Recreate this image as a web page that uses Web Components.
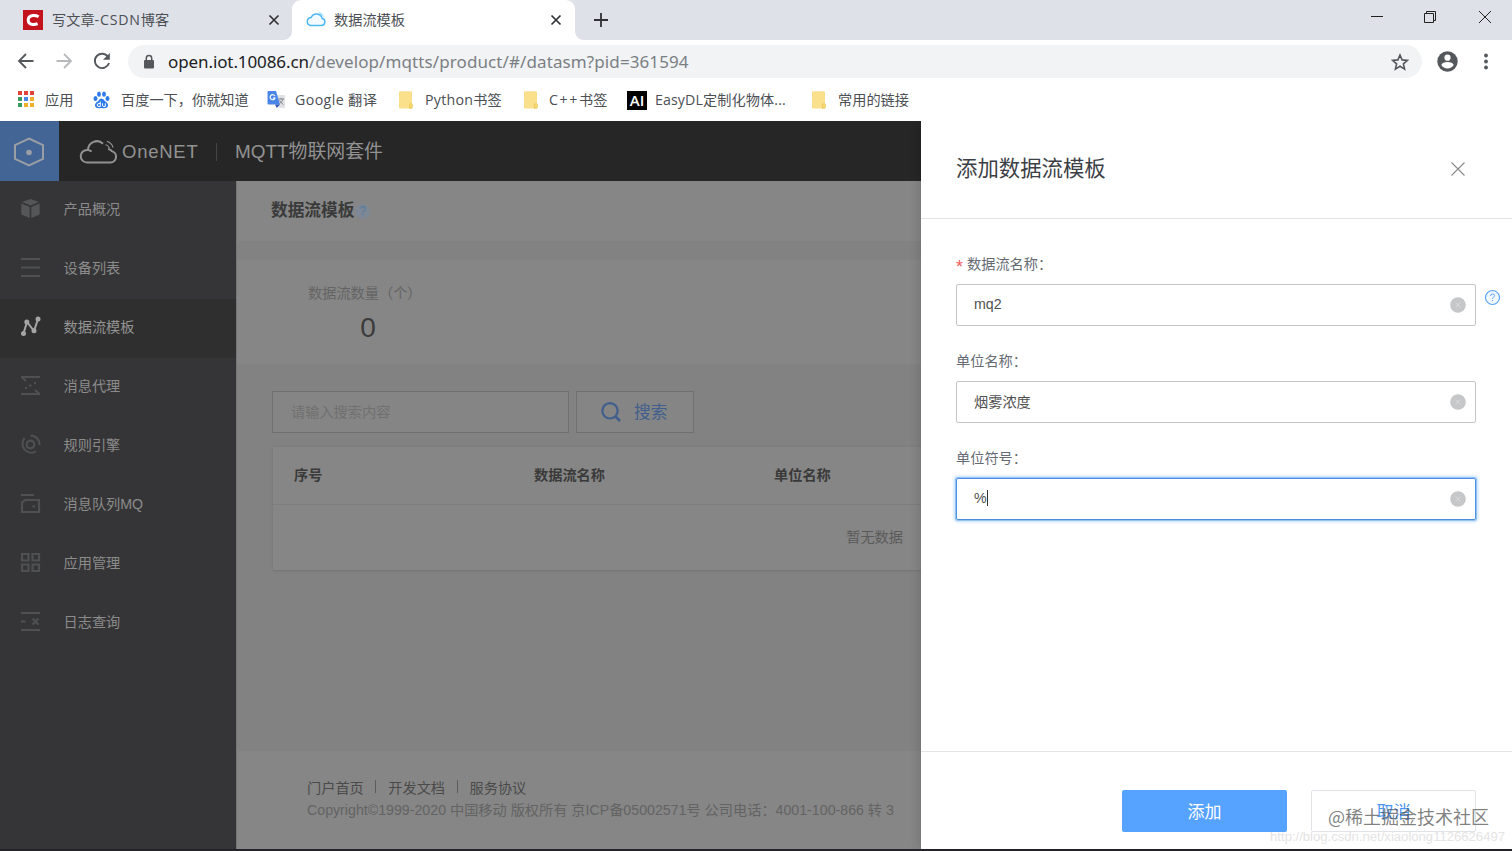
<!DOCTYPE html>
<html lang="zh-CN">
<head>
<meta charset="utf-8">
<title>数据流模板</title>
<style>
	html, body {
		margin: 0;
		height: 100%;
		overflow: hidden;
	}

	body {
		font: 14.2px/20px "Liberation Sans", "Noto Sans CJK SC", sans-serif;
		background: #fff;
	}
</style>
</head>
<body>
<browser-window></browser-window>

<script>
function define(name, html) {
	customElements.define(name, class extends HTMLElement {
		constructor() {
			super();
			this.attachShadow({ mode: 'open' });
			this.shadowRoot.innerHTML = html;
		}
	});
}

/* ---------- browser ---------- */

define('browser-tab', `
	<style>
	:host {
		display: flex;
		align-items: center;
		box-sizing: border-box;
		height: 40px;
		padding: 0 11px 0 14px;
		color: #4c4f54;
		position: relative;
	}

	:host([active]) {
		background: #fff;
		border-radius: 9px 9px 0 0;
	}

	:host([active])::before,
	:host([active])::after {
		content: '';
		position: absolute;
		bottom: 0;
		width: 8px;
		height: 8px;
	}

	:host([active])::before {
		left: -8px;
		background: radial-gradient(circle at 0 0, transparent 7.5px, #fff 8px);
	}

	:host([active])::after {
		right: -8px;
		background: radial-gradient(circle at 100% 0, transparent 7.5px, #fff 8px);
	}

	.title {
		flex: 1;
		margin-left: 8px;
		white-space: nowrap;
	}

	svg {
		width: 16px;
		height: 16px;
	}
	</style>
	<slot name="icon"></slot>
	<div class="title"><slot></slot></div>
	<svg viewBox="0 0 16 16"><path d="M3.5 3.5l9 9M12.5 3.5l-9 9" stroke="#303236" stroke-width="1.7"/></svg>
`);

define('tab-strip', `
	<style>
	:host {
		display: flex;
		height: 40px;
		background: #dee1e8;
		font-family: "Open Sans", "Noto Sans CJK SC", sans-serif;
	}

	.first {
		width: 292px;
		padding: 0 10px 0 23px;
	}

	.first span {
		margin-left: 1px;
	}

	.first em {
		font-style: normal;
		letter-spacing: .8px;
	}

	.second {
		width: 283px;
		padding-left: 13px;
	}

	.second span {
		margin-left: -1px;
	}

	.plus {
		width: 16px;
		margin: 12px 0 0 18px;
		height: 16px;
	}

	.win {
		display: flex;
		gap: 38px;
		margin: 9px 19px 0 auto;
	}

	.win svg {
		width: 16px;
		height: 16px;
	}
	</style>
	<browser-tab class="first">
		<svg slot="icon" width="20" height="20" viewBox="0 0 20 20"><rect width="20" height="20" fill="#c3141e"/><path d="M15.600 6.700Q13 5.200 9.600 5.600 5.200 6.400 5.200 10.200q.2 4 4.600 4.200 2.600.2 4.800-.8" fill="none" stroke="#fff" stroke-width="3"/></svg>
		<span>写文章<em>-CSDN</em>博客</span>
	</browser-tab>
	<browser-tab class="second" active>
		<svg slot="icon" width="22" height="18" viewBox="0 0 22 18"><path d="M5.500 14.500h11a3.500 3.500 0 0 0 .7-6.900A5.800 5.800 0 0 0 6.200 6.400a4.100 4.100 0 0 0-.7 8.100z" fill="#f3fbff" stroke="#4db8f2" stroke-width="1.5"/><path d="M14 1.600q3.600 1 4.600 4" fill="none" stroke="#8bd3f7"/></svg>
		<span>数据流模板</span>
	</browser-tab>
	<svg class="plus" viewBox="0 0 16 16"><path d="M8 1v14M1 8h14" stroke="#303236" stroke-width="1.8"/></svg>
	<div class="win">
		<svg viewBox="0 0 16 16"><path d="M2 7.500h12" stroke="#222"/></svg>
		<svg viewBox="0 0 16 16"><path d="M1.500 4.500h9v9h-9zM3.500 4.500v-2h9v9h-2" fill="none" stroke="#222"/></svg>
		<svg viewBox="0 0 16 16"><path d="M2 2l12 12M14 2l-12 12" stroke="#222"/></svg>
	</div>
`);

define('browser-toolbar', `
	<style>
	:host {
		display: flex;
		align-items: center;
		height: 43px;
		padding: 0 15px 0 16px;
		font-family: "Noto Sans", sans-serif;
	}

	.nav {
		display: flex;
		gap: 18px;
		margin-right: 16px;
		padding-bottom: 1px;
	}

	.nav svg {
		width: 20px;
		height: 20px;
	}

	.address {
		flex: 1;
		display: flex;
		align-items: center;
		height: 33px;
		padding: 0 11px 0 14px;
		margin-right: 15px;
		border-radius: 17px;
		background: #f1f3f4;
		font-size: 17px;
		line-height: 33px;
		color: #7b7f84;
		white-space: nowrap;
	}

	.url {
		margin-left: 12px;
		flex: 1;
		letter-spacing: .1px;
	}

	b {
		font-weight: 400;
		letter-spacing: -.1px;
		color: #202124;
	}

	.dots {
		margin-left: 16px;
	}
	</style>
	<div class="nav">
		<svg viewBox="0 0 20 20"><path d="M17.500 10H3M10 3l-7 7 7 7" fill="none" stroke="#54575b" stroke-width="1.8"/></svg>
		<svg viewBox="0 0 20 20"><path d="M2.500 10H17M10 3l7 7-7 7" fill="none" stroke="#b7b9bb" stroke-width="1.8"/></svg>
		<svg viewBox="0 0 20 20"><path d="M16.300 6.200A7.200 7.200 0 1 0 17 12" fill="none" stroke="#54575b" stroke-width="1.900"/><path d="M17.800 2v6.800H11z" fill="#54575b"/></svg>
	</div>
	<div class="address">
		<svg width="14" height="16" viewBox="0 0 14 16"><rect x="2" y="6" width="10" height="8.500" rx="1" fill="#54575b"/><path d="M4.300 6.500V4.300a2.700 2.700 0 0 1 5.400 0v2.200" fill="none" stroke="#54575b" stroke-width="1.500"/></svg>
		<div class="url"><b>open.iot.10086.cn</b>/develop/mqtts/product/#/datasm?pid=361594</div>
		<svg width="20" height="20" viewBox="0 0 20 20"><path d="M9 3l2.100 4.900 5.300.5-4 3.500 1.200 5.200L9 14.300l-4.600 2.800 1.200-5.200-4-3.500 5.300-.5z" fill="none" stroke="#54575b" stroke-width="1.600"/></svg>
	</div>
	<svg width="22" height="22" viewBox="0 0 22 22"><circle cx="10.500" cy="10.500" r="10.200" fill="#54575b"/><circle cx="10.500" cy="6.700" r="3.100" fill="#fff"/><path d="M4.300 14q1-3 6.200-3t6.200 3q-2.200 3.400-6.200 3.400t-6.200-3.400z" fill="#fff"/></svg>
	<svg class="dots" width="22" height="20" viewBox="0 0 22 20"><g fill="#54575b"><circle cx="11" cy="3.500" r="1.900"/><circle cx="11" cy="9.500" r="1.900"/><circle cx="11" cy="15.500" r="1.900"/></g></svg>
`);

define('bookmark-item', `
	<style>
	:host {
		display: flex;
		align-items: center;
		flex: none;
		white-space: nowrap;
	}

	.icon {
		display: flex;
		flex: none;
		width: var(--icon-box, 28px);
	}
	</style>
	<div class="icon"><slot name="icon"></slot></div>
	<slot></slot>
`);

define('bookmark-bar', `
	<style>
	:host {
		display: flex;
		align-items: center;
		height: 38px;
		box-sizing: border-box;
		padding: 0 0 4px 17px;
		color: #4c4f54;
		font-family: "Open Sans", "Noto Sans CJK SC", sans-serif;
	}
	</style>
	<bookmark-item style="width:76px">
		<svg slot="icon" width="18" height="18" viewBox="0 0 18 18"><path d="M1 0h4v4H1zM7 0h4v4H7zM13 0h4v4h-4z" fill="#e0453a"/><path d="M1 6h4v4H1zM1 12h4v4H1z" fill="#3b9b5f"/><path d="M7 6h4v4H7z" fill="#4a86e8"/><path d="M13 6h4v4h-4zM7 12h4v4H7zM13 12h4v4h-4z" fill="#eeb02c"/></svg>应用
	</bookmark-item>
	<bookmark-item style="width:174px">
		<svg slot="icon" width="17" height="18" viewBox="0 0 17 18"><g fill="#2f7bea"><ellipse cx="2.500" cy="7.500" rx="2" ry="2.600"/><ellipse cx="6" cy="3.200" rx="1.900" ry="2.600"/><ellipse cx="11" cy="3.200" rx="1.900" ry="2.600"/><ellipse cx="14.500" cy="7.500" rx="2" ry="2.600"/><path d="M8.500 7.500q2 0 3.500 2.800 3.500 2 3 5Q14 18 8.500 17 3 18 2 15.300q-.5-3 3-5Q6.500 7.500 8.500 7.500z"/></g><path d="M7.300 10.500v5H6q-1.800 0-1.800-1.500T6 12.500h1.300M9.500 12.300v2q0 1.200 1.300 1.200h1.500v-3.200" fill="none" stroke="#fff"/></svg>百度一下，你就知道
	</bookmark-item>
	<bookmark-item style="width:131px;letter-spacing:.4px">
		<svg slot="icon" width="18" height="18" viewBox="0 0 18 18"><path d="M8 4h9q1 0 1 1v11q0 1-1 1h-5z" fill="#dfe1e4"/><path d="M1.500 0H9l4 13.500H1.500Q.5 13.500.5 12.500V1q0-1 1-1z" fill="#4a86e8"/><path d="M8 13.500h5L9.800 17z" fill="#3157b5"/><path d="M7.800 5A2.500 2.500 0 1 0 8 7H5.900" fill="none" stroke="#fff" stroke-width="1.200"/><path d="M11.500 8H17M14 6.800V8M16 8q-1 3-3 4.500M12.500 9.500q1.500 2.500 4 4" fill="none" stroke="#7b8188" stroke-width=".9"/></svg>Google 翻译
	</bookmark-item>
	<bookmark-item style="width:125px;letter-spacing:.25px;--icon-box:27px"><folder-icon slot="icon"></folder-icon>Python书签</bookmark-item>
	<bookmark-item style="width:104px;--icon-box:26px"><folder-icon slot="icon"></folder-icon><span style="letter-spacing:1.6px">C++</span>书签</bookmark-item>
	<bookmark-item style="width:184px;letter-spacing:.1px"><span slot="icon" style="width:20px;height:19px;background:#000;color:#fff;font:600 15px/19px 'Open Sans';text-align:center">AI</span>EasyDL定制化物体...</bookmark-item>
	<bookmark-item style="--icon-box:27px"><folder-icon slot="icon"></folder-icon>常用的链接</bookmark-item>
`);

define('folder-icon', `
	<style>
	:host {
		display: flex;
	}
	</style>
	<svg width="17" height="18" viewBox="0 0 17 18"><path d="M1 1q0-.8.8-.8h11.400q.8 0 .8.800V17.500H1.800q-.8 0-.8-.8z" fill="#fae08a"/><path d="M11.500 17.300v-3q0-1.800 1.500-1.800t1.500 1.800v1.500q0 1.500-1.500 1.500z" fill="#f8da74" stroke="#e6bd45" stroke-width=".6"/></svg>
`);

/* ---------- console page ---------- */

define('console-header', `
	<style>
	:host {
		display: flex;
		align-items: center;
		height: 59.500px;
		background: #262626;
		color: #929292;
	}

	.home {
		display: flex;
		align-items: center;
		width: 59px;
		height: 59.500px;
		padding-left: 12px;
		box-sizing: border-box;
		background: #426595;
	}

	.cloud {
		margin: 2px 4px 0 20px;
	}

	.brand {
		width: 77px;
		padding-top: 2px;
		font: 18.500px/30px "Liberation Sans", sans-serif;
		letter-spacing: .75px;
	}

	.bar {
		width: 1px;
		height: 18px;
		margin: 3px 18px 0 17px;
		background: #454545;
	}

	.title {
		padding-top: 3px;
		font-size: 18.900px;
		line-height: 28px;
	}
	</style>
	<div class="home">
		<svg width="34" height="32" viewBox="0 0 34 32"><path d="M17 3.500l14 6.700v13.600l-14 6.700L3 23.800V10.200z" fill="none" stroke="#9a9ea5" stroke-width="2"/><circle cx="17" cy="17.500" r="2.800" fill="#9a9ea5"/></svg>
	</div>
	<svg class="cloud" width="39" height="26" viewBox="0 0 39 26"><path d="M8 23.500h23.500a5.800 5.800 0 0 0 1.200-11.400q-.8-2-3.700-1.900M9 10.800A8.800 8.800 0 0 1 24 4.800M8 23.500a6.300 6.300 0 0 1 0-12.600q3 0 4.500 1.800" fill="none" stroke="#929292" stroke-width="2"/><path d="M26.500 5.500q3.200 1 4 4M27.800 2.300q5 1.500 6.200 6.200" fill="none" stroke="#929292" stroke-width="1.200"/></svg>
	<div class="brand">OneNET</div>
	<div class="bar"></div>
	<div class="title">MQTT物联网套件</div>
`);

define('side-item', `
	<style>
	:host {
		display: flex;
		align-items: center;
		height: 59px;
		padding-left: 20px;
		color: #8b8b8b;
		white-space: nowrap;
		line-height: 20px;
	}

	:host([active]) {
		background: #2f2f2f;
		color: #939393;
	}

	div {
		display: flex;
		width: 43.500px;
		padding-bottom: 3px;
	}

	.name {
		width: auto;
		padding-bottom: 2px;
	}
	</style>
	<div><slot name="icon"></slot></div>
	<div class="name"><slot></slot></div>
`);

define('side-menu', `
	<style>
	:host {
		display: block;
		width: 236px;
		flex: none;
		background: #353537;
		box-sizing: border-box;
	}

	svg {
		width: 21px;
		height: 21px;
		fill: none;
		stroke: #4f5052;
		stroke-width: 2.200;
	}
	</style>
	<side-item><svg slot="icon" viewBox="0 0 21 21"><g fill="#555658" stroke="none"><path d="M10.500 1l8.500 3-8.500 3.400L2 4z"/><path d="M1.300 5.600l8.400 3.400v11L1.300 16.500zM19.700 5.600L11.300 9v11l8.400-3.500z"/></g></svg>产品概况</side-item>
	<side-item><svg slot="icon" viewBox="0 0 21 21"><path d="M1 2h19M1 10.500h19M1 19h19"/></svg>设备列表</side-item>
	<side-item active><svg slot="icon" viewBox="0 0 21 21"><g stroke="#a5a5a5"><path d="M3.500 17.500L7 6l7 9 4-12" stroke-width="2"/></g><g fill="#a5a5a5" stroke="none"><circle cx="3.500" cy="17.500" r="2.500"/><circle cx="6.800" cy="6" r="2.500"/><circle cx="14" cy="14.800" r="2.500"/><circle cx="18" cy="3" r="2.500"/></g></svg>数据流模板</side-item>
	<side-item><svg slot="icon" viewBox="0 0 21 21"><path d="M1 2h19M1 19h19M1.500 2l4.500 4M19.500 19L15 15M5 13h2M9 10.500h2.500M14 8h2" stroke-width="2"/></svg>消息代理</side-item>
	<side-item><svg slot="icon" viewBox="0 0 21 21"><circle cx="10.500" cy="10.500" r="3.800"/><path d="M4.500 4A9 9 0 0 0 16 17.500M10.500 1.500A9 9 0 0 1 19.500 11" stroke-width="2"/></svg>规则引擎</side-item>
	<side-item><svg slot="icon" viewBox="0 0 21 21"><path d="M1 2h13M5 7h14v12H2V9.500zM12.500 13.300h2.500"/></svg>消息队列MQ</side-item>
	<side-item><svg slot="icon" viewBox="0 0 21 21"><path d="M2 2h6.500v6.500H2zM12.500 2H19v6.500h-6.500zM2 12.500h6.500V19H2zM12.500 12.500H19V19h-6.500z"/></svg>应用管理</side-item>
	<side-item><svg slot="icon" viewBox="0 0 21 21"><path d="M1 2h19M1 19h19M1 10.500h4.500M12.500 7.500l6 6M18.500 7.500l-6 6"/></svg>日志查询</side-item>
`);

define('stream-content', `
	<style>
	:host {
		display: flex;
		flex-direction: column;
		flex: 1;
		min-width: 0;
		background: #828282;
		color: #606060;
		white-space: nowrap;
		border-left: 1px solid #757579;
		box-sizing: border-box;
	}

	.head {
		display: flex;
		align-items: center;
		height: 60px;
		padding-left: 34px;
		background: #868686;
		color: #3a3a3a;
		font-weight: 700;
		font-size: 16.700px;
	}

	.tip {
		width: 15px;
		height: 15px;
		margin: 1px 0 0 1px;
		border-radius: 50%;
		background: #7d8894;
		color: #55799f;
		font: 12px/15px "Liberation Sans", sans-serif;
		text-align: center;
	}

	.stat {
		height: 104px;
		margin-top: 19.500px;
		padding: 23px 0 0 71px;
		box-sizing: border-box;
		background: #868686;
	}

	.label {
		color: #646464;
	}

	.count {
		width: 120px;
		margin-top: 9px;
		text-align: center;
		font-size: 28px;
		line-height: 32px;
		color: #3c3c3c;
	}

	.search {
		display: flex;
		gap: 7px;
		padding: 27px 0 13px 35px;
	}

	.box,
	.btn {
		display: flex;
		align-items: center;
		box-sizing: border-box;
		height: 42px;
		border: 1px solid #6f7072;
		background: #858585;
	}

	.box {
		width: 297px;
		padding-left: 18px;
		color: #707070;
	}

	.btn {
		width: 118px;
		padding-left: 23px;
		gap: 12px;
		font-size: 16.700px;
		line-height: 24px;
		color: #415f8d;
	}

	.btn span {
		padding-top: 2px;
	}

	.table {
		margin-left: 36px;
		height: 124px;
		background: #868686;
		box-shadow: 0 1px 2px #737373;
		box-sizing: border-box;
		border-top: 1px solid #7e7e7e;
	}

	.row {
		display: grid;
		grid-template-columns: 240px 240px 1fr;
		align-items: center;
		height: 55px;
		padding: 0 0 2px 21px;
		border-bottom: 1px solid #7e7e7e;
		color: #3a3a3a;
		font-weight: 700;
	}

	.empty {
		padding: 22px 18px 0 0;
		text-align: right;
		color: #5a5a5a;
	}

	.foot {
		height: 98px;
		margin-top: auto;
		padding: 26px 0 0 70px;
		box-sizing: border-box;
		background: #868686;
		color: #636363;
	}

	.links {
		display: flex;
		align-items: center;
		height: 21px;
		color: #4a4a4a;
	}

	.links i {
		width: 1px;
		height: 13px;
		margin: -2px 12px 0 11.500px;
		background: #5c5c5c;
	}

	.copy {
		margin-top: 2px;
	}
	</style>
	<div class="head">数据流模板<span class="tip">?</span></div>
	<div class="stat">
		<div class="label">数据流数量（个）</div>
		<div class="count">0</div>
	</div>
	<div class="search">
		<div class="box">请输入搜索内容</div>
		<div class="btn"><svg width="22" height="22" viewBox="0 0 22 22"><path d="M15 15l5 5" stroke="#415f8d" stroke-width="2.600"/><circle cx="10" cy="9.800" r="7.700" fill="none" stroke="#415f8d" stroke-width="2.200"/></svg><span>搜索</span></div>
	</div>
	<div class="table">
		<div class="row"><span>序号</span><span>数据流名称</span><span>单位名称</span></div>
		<div class="empty">暂无数据</div>
	</div>
	<div class="foot">
		<div class="links">门户首页<i></i>开发文档<i></i>服务协议</div>
		<div class="copy">Copyright©1999-2020 中国移动 版权所有 京ICP备05002571号 公司电话：4001-100-866 转 3</div>
	</div>
`);

/* ---------- drawer ---------- */

define('form-field', `
	<style>
	:host {
		display: flow-root;
		height: 97px;
		color: #656a73;
	}

	.label {
		display: flex;
		align-items: center;
		gap: 3px;
		height: 20px;
		margin-top: -1px;
	}

	.req {
		display: none;
		color: #f25c5c;
		font-size: 18px;
		padding-top: 6px;
		width: 8px;
	}

	:host([required]) .req {
		display: block;
	}

	.line {
		display: flex;
		margin-top: 10px;
	}

	.input {
		display: flex;
		align-items: center;
		box-sizing: border-box;
		width: 520px;
		height: 42px;
		padding: 0 8px 1px 17px;
		border: 1px solid #c4c6c9;
		border-radius: 2px;
		color: #505050;
	}

	:host([focused]) .input {
		border-color: #4a90e2;
		box-shadow: 0 0 0 1px #4a90e260, 0 0 3px 2px #bddcff;
	}

	:host([focused]) .value::after {
		content: '';
		display: inline-block;
		width: 1px;
		height: 16px;
		vertical-align: -3px;
		background: #333;
	}

	.value {
		flex: 1;
		padding-bottom: var(--lift, 2px);
	}
	</style>
	<div class="label"><span class="req">*</span><slot name="label"></slot></div>
	<div class="line">
		<div class="input">
			<div class="value"><slot></slot></div>
			<svg width="18" height="18" viewBox="0 0 18 18"><circle cx="9" cy="9" r="7.800" fill="#c5c7c9"/><path d="M6.500 6.500l5 5M11.500 6.500l-5 5" stroke="#d8d9da"/></svg>
		</div>
		<slot name="help"></slot>
	</div>
`);

define('template-drawer', `
	<style>
	:host {
		display: flex;
		flex-direction: column;
		width: 591px;
		flex: none;
		background: #fff;
		box-shadow: -1px 0 10px rgba(0, 0, 0, .16);
		position: relative;
	}

	.head {
		display: flex;
		align-items: center;
		justify-content: space-between;
		box-sizing: border-box;
		height: 98px;
		padding: 0 45px 2px 35px;
		border-bottom: 1px solid #e3e4e6;
		font-size: 21.400px;
		line-height: 30px;
		color: #3c3f46;
	}

	.body {
		flex: 1;
		padding: 36px 0 0 35px;
	}

	.foot {
		display: flex;
		gap: 24px;
		box-sizing: border-box;
		height: 98px;
		padding: 38px 0 0 201px;
		border-top: 1px solid #e3e4e6;
		font-size: 17px;
		line-height: 46px;
		text-align: center;
	}

	.ok,
	.cancel {
		box-sizing: border-box;
		width: 165px;
		height: 42px;
		border-radius: 2px;
	}

	.ok {
		background: #56a2ff;
		color: #fff;
	}

	.cancel {
		border: 1px solid #e0e3e7;
		color: #4b96f3;
		line-height: 44px;
	}

	[slot=help] {
		margin: 5px 0 0 8px;
	}
	</style>
	<div class="head">添加数据流模板
		<svg width="18" height="18" viewBox="0 0 18 18"><path d="M2.500 2.500l13 13M15.500 2.500l-13 13" stroke="#8a8a8a" stroke-width="1.100"/></svg>
	</div>
	<div class="body">
		<form-field required>
			<span slot="label">数据流名称：</span>mq2
			<svg slot="help" width="17" height="17" viewBox="0 0 17 17"><circle cx="8.500" cy="8.500" r="7" fill="#f0f7ff" stroke="#5ba5f8" stroke-width="1.200"/><path d="M6.500 7q0-2 2-2t2 1.700q0 1-1 1.500-1 .6-1 1.600M8.500 11v1.200" fill="none" stroke="#5ba5f8"/></svg>
		</form-field>
		<form-field style="--lift:0px"><span slot="label">单位名称：</span>烟雾浓度</form-field>
		<form-field focused><span slot="label">单位符号：</span>%</form-field>
	</div>
	<div class="foot">
		<div class="ok">添加</div>
		<div class="cancel">取消</div>
	</div>
`);

define('browser-window', `
	<style>
	:host {
		display: flex;
		flex-direction: column;
		height: 851px;
		width: 1512px;
		position: relative;
	}

	.page {
		display: flex;
		flex: 1;
		overflow: hidden;
		border-bottom: 2px solid #242428;
	}

	.console {
		display: flex;
		flex-direction: column;
		width: 921px;
	}

	.main {
		display: flex;
		flex: 1;
	}

	.mark,
	.link {
		position: absolute;
		white-space: nowrap;
	}

	.mark {
		left: 1328px;
		top: 803px;
		font: 18px/26px "Noto Sans CJK SC", sans-serif;
		color: rgba(80, 80, 80, .72);
	}

	.link {
		right: 7px;
		top: 827px;
		font: 13.100px/20px "Liberation Sans", sans-serif;
		color: #e4e4e4;
	}
	</style>
	<tab-strip></tab-strip>
	<browser-toolbar></browser-toolbar>
	<bookmark-bar></bookmark-bar>
	<div class="page">
		<div class="console">
			<console-header></console-header>
			<div class="main">
				<side-menu></side-menu>
				<stream-content></stream-content>
			</div>
		</div>
		<template-drawer></template-drawer>
	</div>
	<div class="mark">@稀土掘金技术社区</div>
	<div class="link">http://blog.csdn.net/xiaolong1126626497</div>
`);
</script>
</body>
</html>
